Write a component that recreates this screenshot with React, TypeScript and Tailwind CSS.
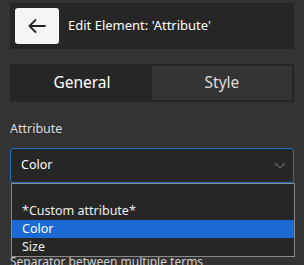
import React from "react";

export default function App() {
  const font = { fontFamily: '"Noto Sans", "Open Sans", sans-serif' };
  return (
    <div
      className="relative w-[304px] h-[265px] overflow-hidden bg-[#333333] px-[10px] pt-[3px]"
      style={font}
    >
      <div className="flex h-[46px] items-center gap-[9px] bg-[#262626] pl-[5px]">
        <button className="flex h-[36px] w-[44px] items-center justify-center rounded-[3px] bg-[#f5f5f5]">
          <svg width="18" height="14" viewBox="0 0 18 14" fill="none">
            <path
              d="M1.5 7H17M7.5 1L1.5 7L7.5 13"
              stroke="#222"
              strokeWidth="1.8"
              strokeLinecap="round"
              strokeLinejoin="round"
            />
          </svg>
        </button>
        <span className="text-[13px] text-white">Edit Element: 'Attribute'</span>
      </div>

      <div className="mt-[15px] flex h-[38px] bg-[#262626] p-[2px]">
        <div className="flex flex-1 items-center justify-center text-[15.5px] text-white">
          General
        </div>
        <div className="flex flex-1 items-center justify-center bg-[#343434] text-[15.5px] text-[#dcdcdc]">
          Style
        </div>
      </div>

      <div className="mt-[18px] h-[18px] text-[12.5px] leading-[18px] text-[#dddddd]">
        Attribute
      </div>

      <div className="mt-[10px] flex h-[35px] items-center justify-between rounded-[3px] border border-[#1f6fc2] bg-[#262626] pl-[10px] pr-[7px]">
        <span className="text-[12.5px] text-white">Color</span>
        <svg width="12" height="7" viewBox="0 0 12 7" fill="none">
          <path d="M1 1L6 6L11 1" stroke="#5a5a5a" strokeWidth="1.6" />
        </svg>
      </div>

      <div className="mt-[70px] text-[12px] leading-[18px] text-[#cfcfcf]">
        Separator between multiple terms
      </div>

      <div className="absolute left-[11px] top-[183px] w-[284px] border border-[#8a8a8a] bg-[#262626] text-[12.5px] leading-[18px] text-[#eeeeee]">
        <div className="h-[18px] pl-[10px]"></div>
        <div className="h-[18px] pl-[10px]">*Custom attribute*</div>
        <div className="h-[18px] bg-[#1b69d3] pl-[10px] text-white">Color</div>
        <div className="h-[18px] pl-[10px]">Size</div>
      </div>
    </div>
  );
}
